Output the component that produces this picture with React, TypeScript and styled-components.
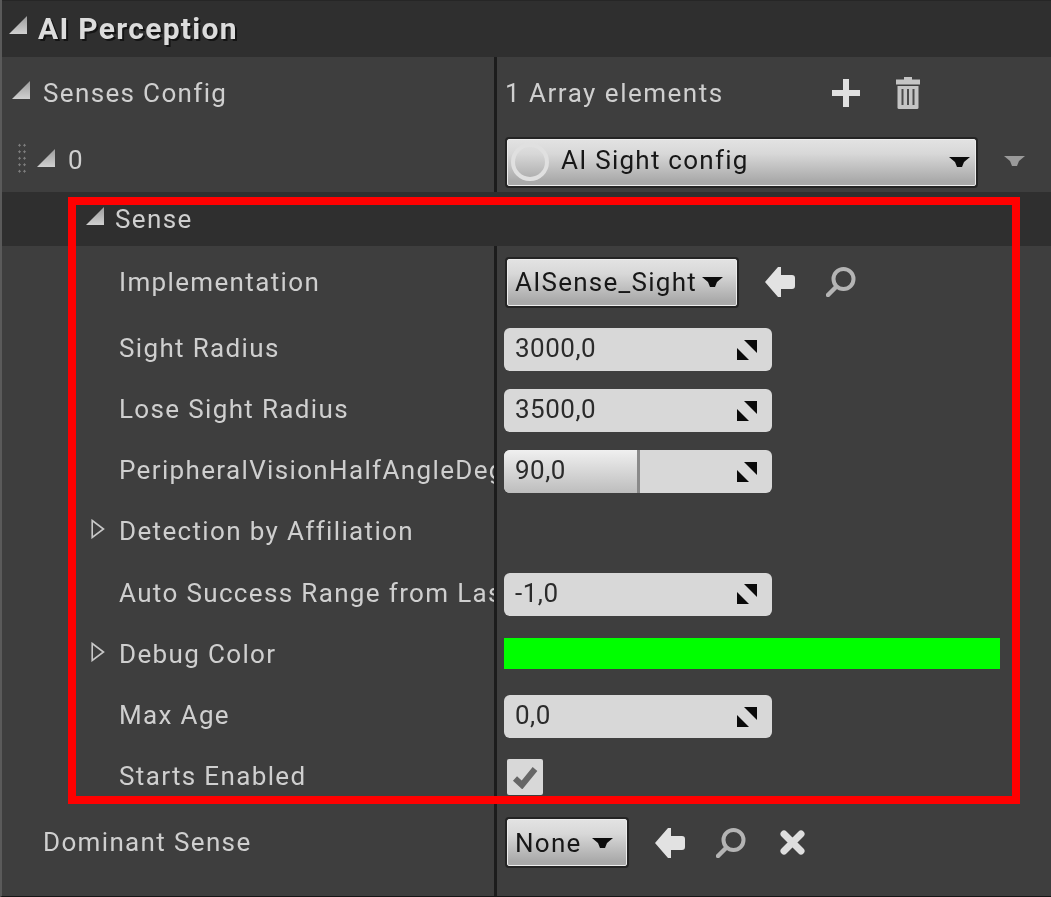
import styled, { createGlobalStyle } from "styled-components";

const GlobalStyle = createGlobalStyle`
  html, body {
    margin: 0;
    padding: 0;
    background: #3e3e3e;
  }
  body {
    font-family: Roboto, "Liberation Sans", sans-serif;
  }
`;

const Panel = styled.div`
  position: relative;
  width: 1051px;
  height: 897px;
  box-sizing: border-box;
  overflow: hidden;
  display: flex;
  flex-direction: column;
  background: #3e3e3e;
  border-left: 2px solid #5a5a5a;
  border-bottom: 1px solid #161616;
`;

const Header = styled.div`
  height: 57px;
  flex: none;
  display: flex;
  align-items: center;
  gap: 11px;
  padding: 0 0 2px 7px;
  background: #2f2f2f;
  border-top: 1px solid #262626;
  box-sizing: border-box;
`;

const HeaderTitle = styled.span`
  font-size: 30px;
  font-weight: 700;
  letter-spacing: 1.3px;
  color: #dcdcdc;
  text-shadow: 2px 2px 0 #141414;
  filter: blur(0.6px);
`;

const SubHeader = styled.div`
  height: 54px;
  flex: none;
  display: flex;
  align-items: center;
  gap: 11px;
  padding-left: 84px;
  background: #2f2f2f;
`;

const Row = styled.div<{ $h: number }>`
  height: ${p => p.$h}px;
  flex: none;
  display: flex;
`;

const NameCell = styled.div<{ $indent: number }>`
  width: 492px;
  flex: none;
  box-sizing: border-box;
  padding-left: ${p => p.$indent}px;
  display: flex;
  align-items: center;
  overflow: hidden;
  white-space: nowrap;
`;

const ValueCell = styled.div`
  flex: 1;
  display: flex;
  align-items: center;
  padding-left: 7px;
  border-left: 3px solid #1c1c1c;
`;

const Filler = styled.div`
  flex: 1;
  display: flex;
`;

const Label = styled.span<{ $lift?: number }>`
  font-size: 26px;
  letter-spacing: 1.35px;
  color: #cfcfcf;
  padding-bottom: ${p => p.$lift ?? 0}px;
  filter: blur(0.6px);
`;

const Caret = styled.svg`
  flex: none;
  display: block;
  margin-bottom: 6px;
`;

const Slot = styled.span<{ $w: number }>`
  width: ${p => p.$w}px;
  flex: none;
  display: flex;
  align-items: center;
`;

const Grip = styled.span`
  width: 10px;
  height: 33px;
  flex: none;
  margin-right: 10px;
  margin-bottom: 4px;
  background-image: radial-gradient(circle, #7d7d7d 1px, transparent 1.1px);
  background-size: 5px 6.5px;
`;

const CountText = styled(Label)`
  margin: 0 108px 0 1px;
  letter-spacing: 1.5px;
`;

const Combo = styled.div<{ $w: number; $right?: number; $drop?: number }>`
  width: ${p => p.$w}px;
  height: 47px;
  box-sizing: border-box;
  margin: ${p => p.$drop ?? 0}px 0 0 3px;
  padding: 0 ${p => p.$right ?? 13}px 0 7px;
  display: flex;
  align-items: center;
  justify-content: space-between;
  background: linear-gradient(#e2e2e2, #d8d8d8 30%, #a9a9a9 92%);
  border: 1px solid #ececec;
  border-radius: 2px;
  box-shadow: 0 0 0 2px #242424;
`;

const ComboLeft = styled.span`
  display: flex;
  align-items: center;
  gap: 12px;
`;

const ComboText = styled.span<{ $lift?: number }>`
  font-size: 26px;
  letter-spacing: 1.25px;
  color: #171717;
  padding-bottom: ${p => p.$lift ?? 0}px;
  filter: blur(0.6px);
`;

const Radio = styled.span`
  width: 38px;
  height: 38px;
  margin-left: -4px;
  box-sizing: border-box;
  border: 4px solid #e0e0e0;
  border-radius: 50%;
`;

const NumberBox = styled.div`
  position: relative;
  width: 268px;
  height: 43px;
  box-sizing: border-box;
  margin-top: 2px;
  padding: 0 15px 0 11px;
  display: flex;
  align-items: center;
  justify-content: space-between;
  background: #d8d8d8;
  border-radius: 6px;
  overflow: hidden;
`;

const SliderFill = styled.span`
  position: absolute;
  left: 0;
  top: 0;
  bottom: 0;
  box-sizing: border-box;
  background: linear-gradient(#f0f0f0, #bdbdbd);
  border-right: 3px solid #8a8a8a;
`;

const NumberText = styled.span`
  position: relative;
  font-size: 26px;
  letter-spacing: 0.5px;
  color: #2b2b2b;
  padding-bottom: 3px;
  filter: blur(0.6px);
`;

const ColorBar = styled.div`
  width: 496px;
  height: 31px;
  margin-bottom: 2px;
  background: #00ff00;
`;

const CheckBox = styled.div`
  width: 36px;
  height: 36px;
  margin-left: 3px;
  display: flex;
  align-items: center;
  justify-content: center;
  background: #d8d8d8;
  border-radius: 2px;
`;

const IconGroup = styled.div`
  display: flex;
  align-items: center;
  margin-left: 28px;
`;

const IconSlot = styled.span<{ $w: number }>`
  width: ${p => p.$w}px;
  flex: none;
  display: flex;
  align-items: center;
`;

const Smooth = styled.svg`
  display: block;
  flex: none;
  filter: blur(0.4px);
`;

const RedFrame = styled.div`
  position: absolute;
  left: 66px;
  top: 197px;
  width: 952px;
  height: 607px;
  box-sizing: border-box;
  border: 8px solid #ff0000;
  pointer-events: none;
`;

const OpenCaret = () => (
  <Caret width="18" height="18" viewBox="0 0 18 18">
    <defs>
      <linearGradient id="caretFill" x1="0" y1="0" x2="0" y2="1">
        <stop offset="0" stopColor="#9c9c9c" />
        <stop offset="1" stopColor="#d0d0d0" />
      </linearGradient>
    </defs>
    <polygon points="18,0 18,18 0,18" fill="url(#caretFill)" />
  </Caret>
);

const ClosedCaret = () => (
  <Caret width="14" height="20" viewBox="0 0 14 20">
    <polygon points="1.2,1.5 12.5,10 1.2,18.5" fill="none" stroke="#c8c8c8" strokeWidth="1.6" />
  </Caret>
);

const DownArrow = ({ color = "#0c0c0c" }: { color?: string }) => (
  <svg width="21" height="10" viewBox="0 0 21 10" style={{ flex: "none" }}>
    <polygon points="0,0 21,0 15,5 13,10 8,10 6,5" fill={color} />
  </svg>
);

const SpinIcon = () => (
  <svg width="20" height="20" viewBox="0 0 20 20" style={{ position: "relative", flex: "none" }}>
    <polygon points="7,0 20,0 20,13" fill="#0a0a0a" />
    <polygon points="0,8 0,20 12,20" fill="#0a0a0a" />
  </svg>
);

const PlusIcon = () => (
  <Smooth width="28" height="28" viewBox="0 0 28 28">
    <path d="M11 0h6v11h11v6H17v11h-6V17H0v-6h11z" fill="#e0e0e0" />
  </Smooth>
);

const TrashIcon = () => (
  <Smooth width="26" height="32" viewBox="0 0 26 32">
    <path d="M9 0h8v2.5h8v5H1v-5h8z" fill="#c4c4c4" />
    <path d="M2.5 9h21v21.5a1.5 1.5 0 0 1-1.5 1.5H4a1.5 1.5 0 0 1-1.5-1.5z" fill="#c4c4c4" />
    <path d="M7.5 12v16M13 12v16M18.5 12v16" stroke="#4a4a4a" strokeWidth="2" />
  </Smooth>
);

const BackIcon = () => (
  <Smooth width="30" height="30" viewBox="0 0 30 30">
    <path d="M13 0 0 15l13 15h3v-8h11a3 3 0 0 0 3-3v-8a3 3 0 0 0-3-3H16V0z" fill="#e2e2e2" />
  </Smooth>
);

const SearchIcon = () => (
  <Smooth width="30" height="30" viewBox="0 0 30 30">
    <circle cx="17.5" cy="12" r="10" fill="none" stroke="#b4b4b4" strokeWidth="4" />
    <path d="M10 20 2 28" stroke="#b4b4b4" strokeWidth="4.5" strokeLinecap="round" />
  </Smooth>
);

const ClearIcon = () => (
  <Smooth width="25" height="25" viewBox="0 0 25 25">
    <path d="M4 4 21 21M21 4 4 21" stroke="#dedede" strokeWidth="7" strokeLinecap="round" />
  </Smooth>
);

const CheckIcon = () => (
  <Smooth width="26" height="24" viewBox="0 0 26 24">
    <path d="M3 13.5 10 20 23 4" fill="none" stroke="#666666" strokeWidth="6" />
  </Smooth>
);

const PropName = ({
  indent,
  closed,
  lift = 1,
  children,
}: {
  indent: number;
  closed?: boolean;
  lift?: number;
  children: string;
}) => (
  <NameCell $indent={closed ? indent - 28 : indent}>
    {closed ? (
      <Slot $w={28}>
        <ClosedCaret />
      </Slot>
    ) : null}
    <Label $lift={lift}>{children}</Label>
  </NameCell>
);

const NumberValue = ({ value, fill }: { value: string; fill?: number }) => (
  <NumberBox>
    {fill ? <SliderFill style={{ width: fill }} /> : null}
    <NumberText>{value}</NumberText>
    <SpinIcon />
  </NumberBox>
);

const numberRows = [
  { name: "Sight Radius", value: "3000,0" },
  { name: "Lose Sight Radius", value: "3500,0" },
  { name: "PeripheralVisionHalfAngleDegrees", value: "90,0", fill: 136 },
];

function App() {
  return (
    <Panel>
      <GlobalStyle />
      <Header>
        <OpenCaret />
        <HeaderTitle>AI Perception</HeaderTitle>
      </Header>

      <Row $h={72}>
        <NameCell $indent={10}>
          <Slot $w={31}>
            <OpenCaret />
          </Slot>
          <Label>Senses Config</Label>
        </NameCell>
        <ValueCell>
          <CountText>1 Array elements</CountText>
          <IconSlot $w={63}>
            <PlusIcon />
          </IconSlot>
          <TrashIcon />
        </ValueCell>
      </Row>

      <Row $h={63}>
        <NameCell $indent={15}>
          <Grip />
          <Slot $w={31}>
            <OpenCaret />
          </Slot>
          <Label $lift={1}>0</Label>
        </NameCell>
        <ValueCell>
          <Combo $w={469} $right={5} $drop={3}>
            <ComboLeft>
              <Radio />
              <ComboText $lift={4}>AI Sight config</ComboText>
            </ComboLeft>
            <DownArrow />
          </Combo>
          <IconGroup>
            <DownArrow color="#9a9a9a" />
          </IconGroup>
        </ValueCell>
      </Row>

      <SubHeader>
        <OpenCaret />
        <Label>Sense</Label>
      </SubHeader>

      <Row $h={72}>
        <PropName indent={117} lift={0}>
          Implementation
        </PropName>
        <ValueCell>
          <Combo $w={230}>
            <ComboText>AISense_Sight</ComboText>
            <DownArrow />
          </Combo>
          <IconGroup>
            <IconSlot $w={61}>
              <BackIcon />
            </IconSlot>
            <SearchIcon />
          </IconGroup>
        </ValueCell>
      </Row>

      {numberRows.map(row => (
        <Row $h={61} key={row.name}>
          <PropName indent={117}>{row.name}</PropName>
          <ValueCell>
            <NumberValue value={row.value} fill={row.fill} />
          </ValueCell>
        </Row>
      ))}

      <Row $h={61}>
        <PropName indent={117} closed>
          Detection by Affiliation
        </PropName>
        <ValueCell />
      </Row>

      <Row $h={62}>
        <PropName indent={117} lift={0}>
          Auto Success Range from Last Seen Location
        </PropName>
        <ValueCell>
          <NumberValue value="-1,0" />
        </ValueCell>
      </Row>

      <Row $h={61}>
        <PropName indent={117} closed>
          Debug Color
        </PropName>
        <ValueCell>
          <ColorBar />
        </ValueCell>
      </Row>

      <Row $h={61}>
        <PropName indent={117}>Max Age</PropName>
        <ValueCell>
          <NumberValue value="0,0" />
        </ValueCell>
      </Row>

      <Row $h={61}>
        <PropName indent={117}>Starts Enabled</PropName>
        <ValueCell>
          <CheckBox>
            <CheckIcon />
          </CheckBox>
        </ValueCell>
      </Row>

      <Row $h={71}>
        <PropName indent={41}>Dominant Sense</PropName>
        <ValueCell>
          <Combo $w={120}>
            <ComboText>None</ComboText>
            <DownArrow />
          </Combo>
          <IconGroup>
            <IconSlot $w={61}>
              <BackIcon />
            </IconSlot>
            <IconSlot $w={64}>
              <SearchIcon />
            </IconSlot>
            <ClearIcon />
          </IconGroup>
        </ValueCell>
      </Row>

      <Filler>
        <NameCell $indent={0} />
        <ValueCell />
      </Filler>

      <RedFrame />
    </Panel>
  );
}

export default App;
